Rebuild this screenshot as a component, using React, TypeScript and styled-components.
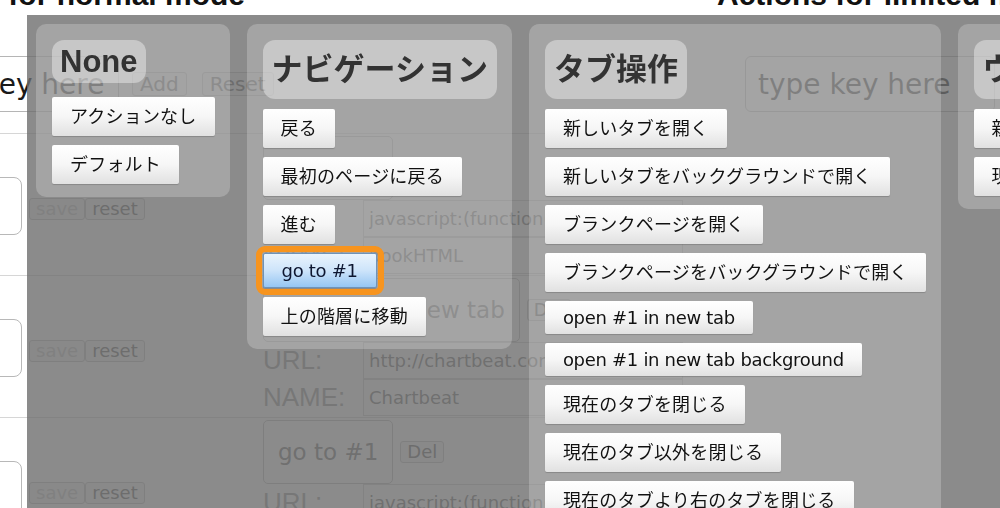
import React from "react";
import styled, { createGlobalStyle, css } from "styled-components";

const GlobalStyle = createGlobalStyle`
  * { box-sizing: border-box; }
  html, body { margin: 0; padding: 0; background: #fff; overflow: hidden; }
  body { font-family: "DejaVu Sans", "Noto Sans CJK JP", sans-serif; color: #222; }
`;

/* ---------- background settings page ---------- */

const Page = styled.div`
  display: grid;
  grid-template-columns: 827px 480px;
  width: 1307px;
  margin: -22px 0 0 -110px;
`;

const Section = styled.section`
  display: flex;
  flex-direction: column;
`;

const Title = styled.h1`
  margin: 0;
  font: bold 30px "Liberation Sans", Arial, sans-serif;
  line-height: 34px;
  color: #111;
  white-space: nowrap;
`;

const KeyBar = styled.div<{ $indent: number }>`
  display: flex;
  align-items: center;
  height: 56px;
  margin: 44px 0 21px;
  padding-left: ${(p) => p.$indent}px;
`;

const KeyInput = styled.input<{ $w: number }>`
  width: ${(p) => p.$w}px;
  height: 56px;
  padding: 0 12px;
  border: 1px solid #b5b5b5;
  border-radius: 6px;
  background: #fff;
  font: 28px "DejaVu Sans", sans-serif;
  color: #1a1a1a;
  outline: none;
`;

const PlainButton = styled.button<{ $size: number; $muted?: boolean; $ml?: number }>`
  margin-left: ${(p) => p.$ml ?? 0}px;
  padding: 0 ${(p) => Math.round(p.$size * 0.36)}px;
  height: ${(p) => p.$size + 4}px;
  border: 1px solid #c4c4c4;
  border-radius: 3px;
  background: #f4f4f4;
  font: ${(p) => p.$size}px "DejaVu Sans", sans-serif;
  line-height: 1;
  color: ${(p) => (p.$muted ? "#c8c8c8" : "#6a6a6a")};
  white-space: nowrap;
`;

const Row = styled.div`
  display: grid;
  grid-template-columns: 373px 1fr;
  height: 142px;
  border-top: 1px solid #d6d6d6;
`;

const KeyCell = styled.div`
  display: flex;
  align-items: flex-start;
  padding: 43px 0 0 22px;
`;

const KeyBox = styled.div`
  width: 110px;
  height: 58px;
  border: 1px solid #b8b8b8;
  border-radius: 8px;
  background: #fff;
  display: flex;
  align-items: center;
  justify-content: center;
  font: 28px "DejaVu Sans", sans-serif;
  color: #333;
`;

const SaveReset = styled.div`
  display: flex;
  margin: 21px 0 0 7px;
`;

const ActionCell = styled.div`
  display: flex;
  flex-direction: column;
  padding-top: 2px;
`;

const ActionLine = styled.div`
  display: flex;
  align-items: center;
  gap: 7px;
`;

const ActionBox = styled.div`
  height: 64px;
  padding: 0 14px;
  display: flex;
  align-items: center;
  border: 1px solid #bdbdbd;
  border-radius: 5px;
  background: #fff;
  font: 23px "DejaVu Sans", sans-serif;
  color: #777;
  white-space: nowrap;
`;

const FieldLine = styled.div`
  display: grid;
  grid-template-columns: 100px 320px;
  align-items: center;
  height: 37px;
`;

const FieldLabel = styled.span`
  font: 26px "Liberation Sans", Arial, sans-serif;
  color: #9c9c9c;
`;

const FieldInput = styled.input`
  height: 37px;
  padding: 0 5px;
  border: 1px solid #cfcfcf;
  background: #fff;
  font: 18px "DejaVu Sans", sans-serif;
  color: #777;
  outline: none;
`;

/* ---------- overlay with action picker ---------- */

const Overlay = styled.div`
  position: fixed;
  left: 27px;
  top: 15px;
  right: 0;
  bottom: 0;
  padding: 9px;
  display: flex;
  align-items: flex-start;
  gap: 17px;
  overflow: hidden;
  background: rgba(110, 110, 110, 0.8);
`;

const Panel = styled.div`
  flex-shrink: 0;
  display: flex;
  flex-direction: column;
  align-items: flex-start;
  padding: 16px 15px 13px 16px;
  border-radius: 10px;
  background: rgba(255, 255, 255, 0.21);
`;

const Heading = styled.h2<{ $cjk?: boolean }>`
  margin: 0 0 ${(p) => (p.$cjk ? 10 : 14)}px;
  padding: 4px ${(p) => (p.$cjk ? 9 : 8)}px;
  font: bold 31px "Liberation Sans", "Noto Sans CJK JP", sans-serif;
  line-height: ${(p) => (p.$cjk ? 51 : 35)}px;
  color: #333;
  white-space: nowrap;
  border-radius: 12px;
  background: rgba(255, 255, 255, 0.38);
`;

const ButtonList = styled.div`
  display: flex;
  flex-direction: column;
  align-items: flex-start;
  gap: 9px;
`;

const ActionButton = styled.button<{ $focused?: boolean; $latin?: boolean }>`
  padding: 6.5px 18px;
  border: 0;
  border-radius: 2px;
  font-family: "DejaVu Sans", "Noto Sans CJK JP", sans-serif;
  font-size: 18px;
  line-height: ${(p) => (p.$latin ? 20 : 26)}px;
  letter-spacing: ${(p) => (p.$latin ? "-0.3px" : "0.2px")};
  color: #111;
  white-space: nowrap;
  background: linear-gradient(#ffffff 0%, #f6f6f6 50%, #e1e1e1 100%);
  box-shadow: 0 1px 1px rgba(0, 0, 0, 0.18);
  ${(p) =>
    p.$focused &&
    css`
      border: 1px solid #6f93b8;
      padding: 6.5px 18px;
      color: #0d1630;
      background: linear-gradient(#eaf4fd 0%, #cde4fa 50%, #96c6f3 100%);
      outline: 6px solid #f7941e;
      outline-offset: 1px;
    `}
`;

type Entry = { key: string; action: string; url: string; name: string };

const entries: Entry[] = [
  { key: "b", action: "go to #1", url: "javascript:(function(){", name: "bookHTML" },
  { key: "c", action: "open #1 in new tab", url: "http://chartbeat.com/", name: "Chartbeat" },
  { key: "g", action: "go to #1", url: "javascript:(function(){", name: "Google" },
];

type Group = { title: string; cjk?: boolean; actions: string[]; focused?: string };

const groups: Group[] = [
  { title: "None", actions: ["アクションなし", "デフォルト"] },
  {
    title: "ナビゲーション",
    cjk: true,
    actions: ["戻る", "最初のページに戻る", "進む", "go to #1", "上の階層に移動"],
    focused: "go to #1",
  },
  {
    title: "タブ操作",
    cjk: true,
    actions: [
      "新しいタブを開く",
      "新しいタブをバックグラウンドで開く",
      "ブランクページを開く",
      "ブランクページをバックグラウンドで開く",
      "open #1 in new tab",
      "open #1 in new tab background",
      "現在のタブを閉じる",
      "現在のタブ以外を閉じる",
      "現在のタブより右のタブを閉じる",
      "現在のタブより左のタブを閉じる",
    ],
  },
  {
    title: "ウィンドウ操作",
    cjk: true,
    actions: ["新しいウィンドウを開く", "現在のウィンドウを閉じる"],
  },
];

const isLatin = (s: string) => /^[\x00-\x7f]+$/.test(s);

export default function App() {
  return (
    <>
      <GlobalStyle />
      <Page>
        <Section>
          <Title>Actions for normal mode</Title>
          <KeyBar $indent={9}>
            <KeyInput $w={220} readOnly value="type key here" />
            <PlainButton $size={20} $ml={13}>Add</PlainButton>
            <PlainButton $size={20} $ml={15}>Reset</PlainButton>
          </KeyBar>
          {entries.map((e, i) => (
            <Row key={i}>
              <KeyCell>
                <KeyBox>{e.key}</KeyBox>
                <SaveReset>
                  <PlainButton $size={18} $muted>save</PlainButton>
                  <PlainButton $size={18}>reset</PlainButton>
                </SaveReset>
              </KeyCell>
              <ActionCell>
                <ActionLine>
                  <ActionBox>{e.action}</ActionBox>
                  <PlainButton $size={18}>Del</PlainButton>
                </ActionLine>
                <FieldLine>
                  <FieldLabel>URL:</FieldLabel>
                  <FieldInput readOnly value={e.url} />
                </FieldLine>
                <FieldLine>
                  <FieldLabel>NAME:</FieldLabel>
                  <FieldInput readOnly value={e.name} />
                </FieldLine>
              </ActionCell>
            </Row>
          ))}
        </Section>
        <Section>
          <Title>Actions for limited mode</Title>
          <KeyBar $indent={28}>
            <KeyInput $w={250} readOnly value="type key here" />
          </KeyBar>
        </Section>
      </Page>

      <Overlay>
        {groups.map((g) => (
          <Panel key={g.title}>
            <Heading $cjk={g.cjk}>{g.title}</Heading>
            <ButtonList>
              {g.actions.map((a) => (
                <ActionButton key={a} $latin={isLatin(a)} $focused={a === g.focused}>
                  {a}
                </ActionButton>
              ))}
            </ButtonList>
          </Panel>
        ))}
      </Overlay>
    </>
  );
}
